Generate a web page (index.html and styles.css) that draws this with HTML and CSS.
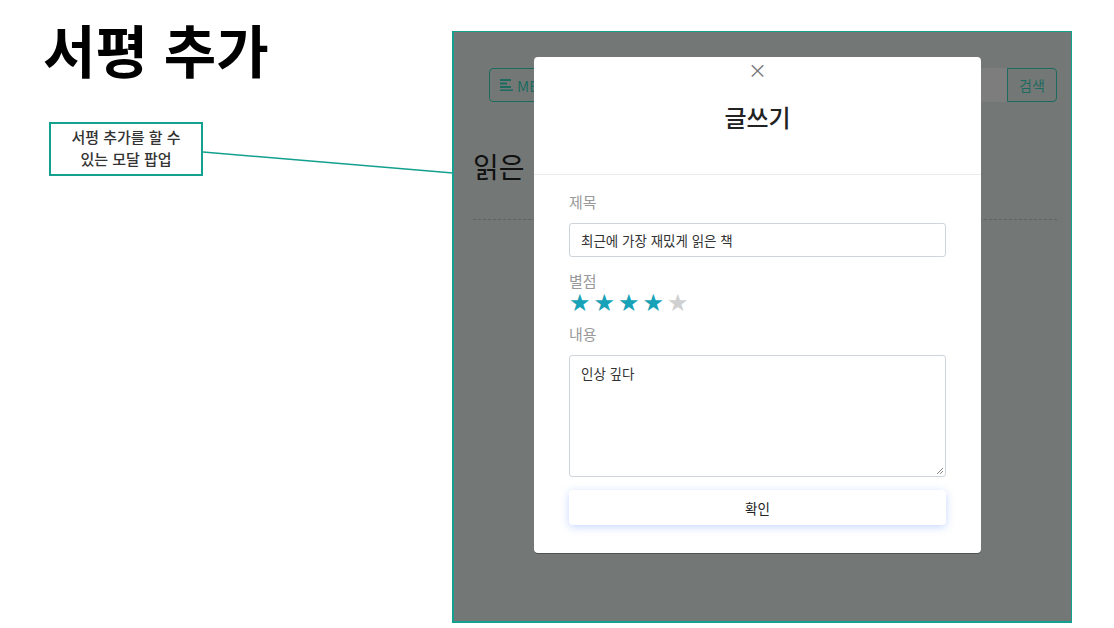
FILE: index.html
```html
<!DOCTYPE html>
<html lang="ko">
<head>
    <meta charset="UTF-8">
    <title>서평 추가</title>
    <link rel="stylesheet" href="styles.css">
</head>
<body>
    <div class="page">
        <!-- Left: slide title and annotation -->
        <div class="side">
            <h1 class="slide-title">서평 추가</h1>
            <div class="note">서평 추가를 할 수<br>있는 모달 팝업</div>
        </div>

        <!-- Right: screenshot frame -->
        <div class="frame">
            <div class="topbar">
                <button class="menu-btn">
                    <svg width="14" height="12" viewBox="0 0 14 12"><rect x="0" y="0" width="11" height="2" fill="#1d6b5e"/><rect x="0" y="3.5" width="7" height="2" fill="#1d6b5e"/><rect x="0" y="7" width="11" height="2" fill="#1d6b5e"/><rect x="0" y="10.5" width="13" height="1.5" fill="#1d6b5e"/></svg>
                    MENU
                </button>
                <div class="search">
                    <div class="search-input"></div>
                    <button class="search-btn">검색</button>
                </div>
            </div>
            <h2 class="list-title">읽은 책</h2>
            <div class="divider"></div>

            <!-- Modal -->
            <div class="modal">
                <div class="modal-head">
                    <span class="close">&times;</span>
                    <h3>글쓰기</h3>
                </div>
                <div class="modal-body">
                    <label class="field-label">제목</label>
                    <div class="input">최근에 가장 재밌게 읽은 책</div>
                    <label class="field-label rate-label">별점</label>
                    <div class="stars">
                        <span class="on">&#9733;</span><span class="on">&#9733;</span><span class="on">&#9733;</span><span class="on">&#9733;</span><span class="off">&#9733;</span>
                    </div>
                    <label class="field-label">내용</label>
                    <div class="textarea">인상 깊다
                        <svg class="grip" width="9" height="9" viewBox="0 0 9 9"><path d="M8 2 L2 8 M8 5 L5 8" stroke="#888" stroke-width="1"/></svg>
                    </div>
                    <button class="ok-btn">확인</button>
                </div>
            </div>
        </div>
    </div>

    <!-- connector line from note to frame -->
    <svg class="connector" width="1114" height="628">
        <line x1="203" y1="152" x2="453" y2="173" stroke="#13a08f" stroke-width="1.5"/>
    </svg>
</body>
</html>
```

FILE: styles.css
```css
body {
    margin: 0;
    background: #fff;
    font-family: "Noto Sans CJK KR", "Noto Sans", sans-serif;
    width: 1114px;
    height: 628px;
    overflow: hidden;
}
.page {
    display: flex;
}
.side {
    width: 452px;
}
.slide-title {
    margin: 12px 0 0 43px;
    font-size: 57px;
    font-weight: 700;
    line-height: 72px;
    color: #000;
}
.note {
    margin: 38px 0 0 49px;
    width: 150px;
    height: 48px;
    border: 2px solid #13a08f;
    font-size: 15px;
    font-weight: 500;
    line-height: 22px;
    color: #333;
    text-align: center;
    padding-top: 2px;
}
.frame {
    position: relative;
    margin-top: 31px;
    width: 620px;
    height: 592px;
    border: 1px solid #13a08f;
    border-left-width: 2px;
    border-bottom-width: 2px;
    background: #737876;
    padding: 0 14px 0 19px;
    box-sizing: border-box;
}
.topbar {
    display: flex;
    justify-content: space-between;
    margin-top: 36px;
    margin-left: 16px;
}
.menu-btn {
    display: flex;
    align-items: center;
    gap: 3px;
    height: 34px;
    padding: 0 10px;
    border: 1px solid #1d6b5e;
    border-radius: 4px;
    background: transparent;
    color: #1d6b5e;
    font-family: inherit;
    font-size: 15px;
}
.search {
    display: flex;
}
.search-input {
    width: 80px;
    height: 34px;
    background: #7d7d7d;
}
.search-btn {
    width: 50px;
    height: 34px;
    border: 1px solid #1d6b5e;
    border-radius: 0 4px 4px 0;
    background: transparent;
    color: #1d6b5e;
    font-family: inherit;
    font-size: 14px;
}
.list-title {
    margin: 44px 0 0 0;
    font-size: 28px;
    font-weight: 400;
    color: #111;
    line-height: 40px;
}
.divider {
    margin-top: 33px;
    border-top: 1px dashed #5f6462;
}
.modal {
    position: absolute;
    left: 80px;
    top: 25px;
    width: 447px;
    height: 496px;
    background: #fff;
    border-radius: 4px;
    box-shadow: 0 1px 0 #4f5453;
}
.modal-head {
    height: 117px;
    border-bottom: 1px solid #e9ecef;
    text-align: center;
}
.close {
    display: block;
    padding-top: 2px;
    height: 22px;
    font-size: 19px;
    line-height: 22px;
    color: #777;
}
.modal-head h3 {
    margin: 20px 0 0;
    font-size: 24px;
    font-weight: 500;
    color: #222;
    line-height: 32px;
}
.modal-body {
    padding: 16px 35px 0 35px;
    display: flex;
    flex-direction: column;
}
.field-label {
    font-size: 15px;
    color: #999;
    line-height: 22px;
}
.input {
    margin-top: 10px;
    height: 32px;
    border: 1px solid #ced4da;
    border-radius: 3px;
    padding: 0 11px;
    font-size: 13.5px;
    line-height: 32px;
    color: #333;
}
.rate-label {
    margin-top: 14px;
    line-height: 19px;
}
.stars {
    display: flex;
    gap: 3px;
    font-size: 24px;
    line-height: 21px;
    height: 21px;
    margin-top: 3px;
    font-family: "DejaVu Sans", sans-serif;
}
.stars .on {
    color: #17a2b8;
}
.stars .off {
    color: #d0d0d0;
}
.stars + .field-label {
    margin-top: 9px;
}
.textarea {
    position: relative;
    margin-top: 10px;
    height: 122px;
    border: 1px solid #ced4da;
    border-radius: 3px;
    padding: 6px 11px;
    box-sizing: border-box;
    font-size: 13.5px;
    line-height: 22px;
    color: #333;
}
.grip {
    position: absolute;
    right: 1px;
    bottom: 1px;
}
.ok-btn {
    margin-top: 13px;
    height: 35px;
    border: none;
    border-radius: 4px;
    background: #fff;
    font-family: inherit;
    font-size: 13.5px;
    color: #222;
    box-shadow: 0 2px 8px rgba(90, 140, 255, 0.35);
}
.connector {
    position: absolute;
    left: 0;
    top: 0;
    pointer-events: none;
}
```
